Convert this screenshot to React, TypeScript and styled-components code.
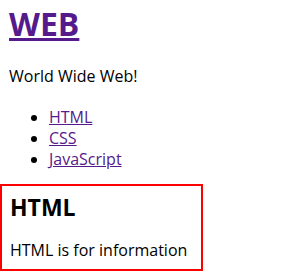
import React from "react";
import styled, { createGlobalStyle } from "styled-components";

const Global = createGlobalStyle`
  html, body { margin: 0; padding: 0; background: #fff; }
  body { font-family: "Open Sans", "Noto Sans CJK KR", sans-serif; color: #000; }
`;

const Page = styled.div`
  display: flex;
  flex-direction: column;
`;

const Intro = styled.div`
  padding-left: 9px;
`;

const Title = styled.h1`
  margin: 0;
  padding-top: 4px;
  font-size: 32px;
  line-height: 40px;
  font-weight: 700;
  a { color: #551a8b; }
`;

const Text = styled.p`
  margin: 22px 0 0;
  font-size: 16px;
  line-height: 21px;
`;

const List = styled.ul`
  margin: 20px 0 0;
  padding-left: 40px;
  font-size: 16px;
  line-height: 21px;
  a { color: #551a8b; }
`;

const Box = styled.section`
  margin-top: 14px;
  width: 203px;
  box-sizing: border-box;
  border: 2px solid #ff0000;
  padding: 6px 8px 8px;
`;

const BoxTitle = styled.h2`
  margin: 0;
  font-size: 23px;
  line-height: 30px;
  font-weight: 700;
`;

const BoxText = styled.p`
  margin: 18px 0 0;
  font-size: 16px;
  line-height: 21px;
`;

export default function App() {
  return (
    <Page>
      <Global />
      <Intro>
        <Title><a href="#">WEB</a></Title>
        <Text>World Wide Web!</Text>
        <List>
          <li><a href="#">HTML</a></li>
          <li><a href="#">CSS</a></li>
          <li><a href="#">JavaScript</a></li>
        </List>
      </Intro>
      <Box>
        <BoxTitle>HTML</BoxTitle>
        <BoxText>HTML is for information</BoxText>
      </Box>
    </Page>
  );
}
